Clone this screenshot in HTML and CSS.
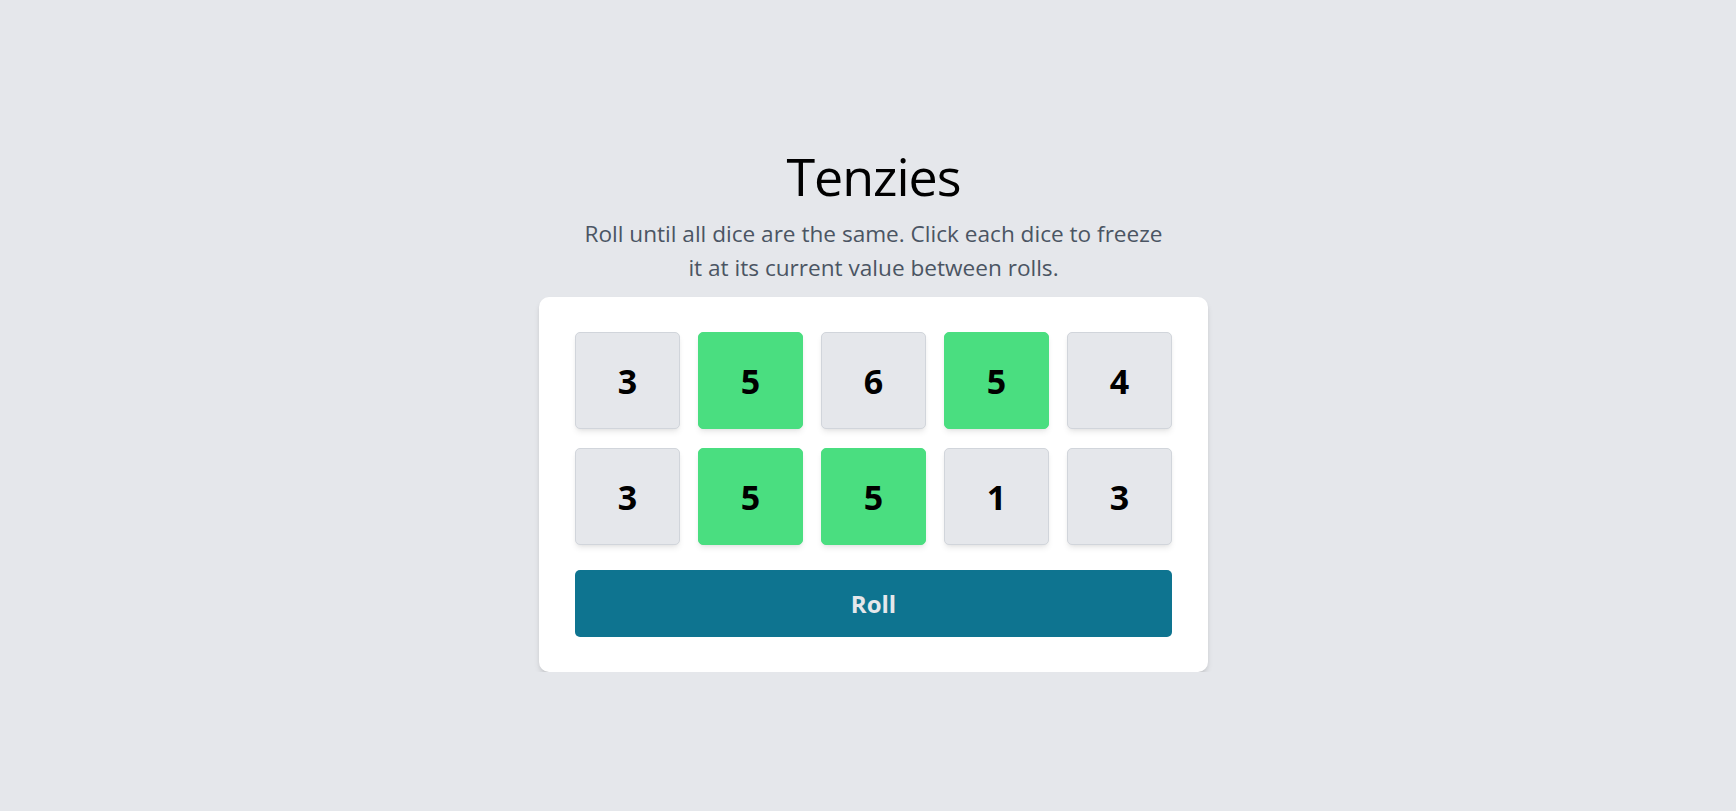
FILE: index.html
```html
<!DOCTYPE html>
<html lang="en">
<head>
<meta charset="utf-8">
<title>Tenzies</title>
<link rel="stylesheet" href="styles.css">
</head>
<body>
<main class="page">
  <h1 class="title">Tenzies</h1>
  <p class="subtitle">Roll until all dice are the same. Click each dice to freeze<br>it at its current value between rolls.</p>
  <section class="card">
    <div class="dice-grid">
      <button class="die">3</button>
      <button class="die held">5</button>
      <button class="die">6</button>
      <button class="die held">5</button>
      <button class="die">4</button>
      <button class="die">3</button>
      <button class="die held">5</button>
      <button class="die held">5</button>
      <button class="die">1</button>
      <button class="die">3</button>
    </div>
    <button class="roll">Roll</button>
  </section>
</main>
</body>
</html>
```
FILE: styles.css
```css
* { box-sizing: border-box; }
html, body { margin: 0; padding: 0; }
body {
  background: #e5e7eb;
  font-family: "Open Sans", "Noto Sans", sans-serif;
  color: #000;
}
.page {
  display: flex;
  flex-direction: column;
  align-items: center;
  padding-top: 140px;
  padding-left: 11px;
}
.title {
  margin: 0;
  font-size: 52px;
  font-weight: 400;
  line-height: 72px;
  letter-spacing: -1px;
}
.subtitle {
  margin: 5px 0 12px;
  text-align: center;
  font-size: 22.6px;
  line-height: 34px;
  color: #4b5563;
  letter-spacing: 0;
}
.card {
  width: 669px;
  background: #fff;
  border-radius: 10px;
  padding: 35px 36px 35px;
  box-shadow: 0 4px 6px -1px rgba(0,0,0,0.12), 0 2px 4px -2px rgba(0,0,0,0.1);
}
.dice-grid {
  display: grid;
  grid-template-columns: repeat(5, 105px);
  grid-auto-rows: 97px;
  column-gap: 18px;
  row-gap: 19px;
}
.die {
  border: 1px solid #d1d5db;
  border-radius: 5px;
  background: #e5e7eb;
  font-family: inherit;
  font-size: 34px;
  font-weight: 700;
  color: #000;
  box-shadow: 0 4px 6px -1px rgba(0,0,0,0.08), 0 2px 4px -2px rgba(0,0,0,0.08);
  padding: 0;
}
.die.held {
  background: #4ade80;
  border-color: #4ade80;
}
.roll {
  display: block;
  width: 100%;
  height: 67px;
  margin-top: 25px;
  border: none;
  border-radius: 5px;
  background: #0e7490;
  color: #e5e7eb;
  font-family: inherit;
  font-size: 24px;
  font-weight: 700;
}
```
